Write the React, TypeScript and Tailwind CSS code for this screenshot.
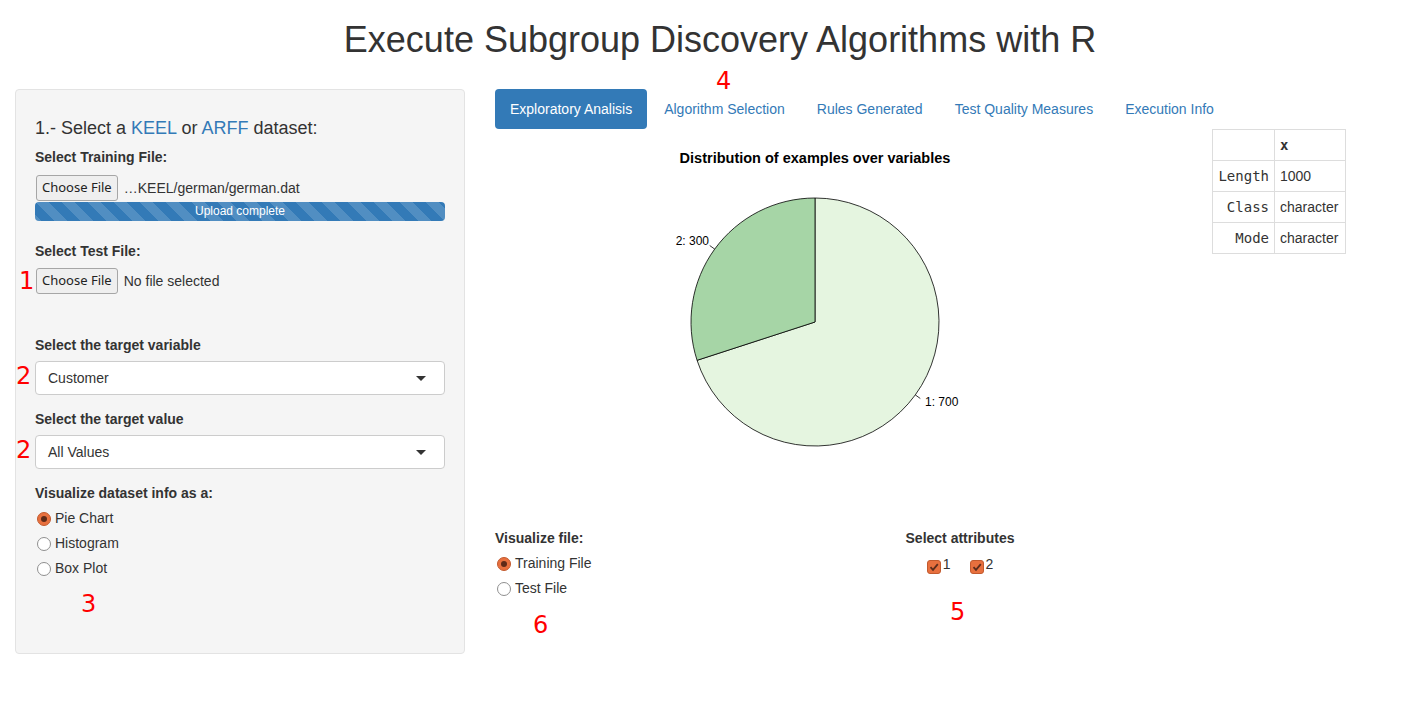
import React from "react";

const sans = "font-['Liberation_Sans',Arial,sans-serif]";

const Radio = ({ checked, label }: { checked?: boolean; label: string }) => (
  <div className="flex items-center h-[25px]">
    {checked ? (
      <span className="ml-[2px] w-[14px] h-[14px] rounded-full bg-[#e8703e] border border-[#c25a2e] flex items-center justify-center">
        <span className="w-[6px] h-[6px] rounded-full bg-[#5e2a18]" />
      </span>
    ) : (
      <span className="ml-[2px] w-[14px] h-[14px] rounded-full bg-white border border-[#8f8f8f]" />
    )}
    <span className="ml-[4px]">{label}</span>
  </div>
);

const Check = ({ label }: { label: string }) => (
  <div className="flex items-start">
    <span className="mt-[6px] w-[14px] h-[14px] rounded-[3px] bg-[#e8703e] border border-[#c25a2e] flex items-center justify-center">
      <svg width="10" height="10" viewBox="0 0 10 10">
        <path d="M1.5 5.2 L4 7.8 L8.8 2.2" fill="none" stroke="#5a2c1c" strokeWidth="1.8" />
      </svg>
    </span>
    <span className="ml-[2px] leading-[20px]">{label}</span>
  </div>
);

const FileInput = ({ name }: { name: string }) => (
  <div className="flex items-center h-[26px]">
    <button className="ml-[1px] h-[26px] px-[5px] rounded-[3px] border border-[#a6a6a6] bg-[#efefef] text-[13px] text-[#222] font-['Noto_Sans',sans-serif]">
      Choose File
    </button>
    <span className="ml-[6px]">{name}</span>
  </div>
);

const Select = ({ value }: { value: string }) => (
  <div className="mt-[6px] h-[34px] bg-white border border-[#cccccc] rounded-[4px] flex items-center justify-between pl-[12px] pr-[18px]">
    <span>{value}</span>
    <span className="w-0 h-0 border-x-[5px] border-x-transparent border-t-[5px] border-t-[#333]" />
  </div>
);

// red annotation digits drawn over the screenshot
const Mark = ({ n, cls }: { n: string; cls: string }) => (
  <span className={"absolute text-[24px] leading-none text-[#ff0000] font-['DejaVu_Sans',sans-serif] " + cls}>{n}</span>
);

const PieChart = () => (
  <svg width="610" height="399" className="block">
    <text x="320" y="34" textAnchor="middle" fontWeight="bold" fontSize="14.5" fontFamily="Liberation Sans, Arial, sans-serif" fill="#000">
      Distribution of examples over variables
    </text>
    <path d="M320 193 L320 69 A124 124 0 1 1 202.07 231.32 Z" fill="#e5f5e0" stroke="#000" strokeWidth="0.8" />
    <path d="M320 193 L320 69 A124 124 0 0 0 202.07 231.32 Z" fill="#a6d5a6" stroke="#000" strokeWidth="0.8" />
    <line x1="219.7" y1="120.1" x2="214.7" y2="116.5" stroke="#000" strokeWidth="0.8" />
    <line x1="420.3" y1="265.9" x2="425.3" y2="269.5" stroke="#000" strokeWidth="0.8" />
    <text x="214" y="116" textAnchor="end" fontSize="12" fontFamily="Liberation Sans, Arial, sans-serif" fill="#000">2: 300</text>
    <text x="430" y="277" fontSize="12" fontFamily="Liberation Sans, Arial, sans-serif" fill="#000">1: 700</text>
  </svg>
);

const rows = [
  ["Length", "1000"],
  ["Class", "character"],
  ["Mode", "character"],
];

export default function App() {
  return (
    <div className={"w-full overflow-hidden bg-white text-[14px] text-[#333] " + sans}>
      <div className="relative w-[1440px] h-[714px] px-[15px] pt-[20px]">
        <h1 className="h-[40px] leading-[40px] text-center text-[36px]">
          Execute Subgroup Discovery Algorithms with R
        </h1>

        <div className="mt-[29px] flex">
          {/* Sidebar */}
          <div className="w-[450px] h-[565px] bg-[#f5f5f5] border border-[#e3e3e3] rounded-[4px] px-[19px] pt-[28px] flex flex-col">
            <h4 className="h-[20px] leading-[20px] text-[18px]">
              1.- Select a <span className="text-[#337ab7]">KEEL</span> or{" "}
              <span className="text-[#337ab7]">ARFF</span> dataset:
            </h4>
            <label className="mt-[9px] h-[20px] leading-[20px] font-bold">Select Training File:</label>
            <div className="mt-[8px]">
              <FileInput name="…KEEL/german/german.dat" />
            </div>
            <div className="mt-[1px] h-[19px] rounded-[4px] bg-[#337ab7] bg-[linear-gradient(45deg,rgba(255,255,255,.15)_25%,transparent_25%,transparent_50%,rgba(255,255,255,.15)_50%,rgba(255,255,255,.15)_75%,transparent_75%,transparent)] bg-[length:26px_26px] text-white text-[12px] leading-[19px] text-center">
              Upload complete
            </div>
            <label className="mt-[20px] h-[20px] leading-[20px] font-bold">Select Test File:</label>
            <div className="mt-[7px]">
              <FileInput name="No file selected" />
            </div>
            <label className="mt-[41px] h-[20px] leading-[20px] font-bold">Select the target variable</label>
            <Select value="Customer" />
            <label className="mt-[14px] h-[20px] leading-[20px] font-bold">Select the target value</label>
            <Select value="All Values" />
            <label className="mt-[14px] h-[20px] leading-[20px] font-bold">Visualize dataset info as a:</label>
            <div className="mt-[3px]">
              <Radio checked label="Pie Chart" />
              <Radio label="Histogram" />
              <Radio label="Box Plot" />
            </div>
          </div>

          {/* Main panel */}
          <div className="ml-[30px] w-[930px] flex flex-col">
            <div className="flex gap-[2px]">
              <span className="px-[15px] py-[10px] leading-[20px] rounded-[4px] bg-[#337ab7] text-white">Exploratory Analisis</span>
              <span className="px-[15px] py-[10px] leading-[20px] text-[#337ab7]">Algorithm Selection</span>
              <span className="px-[15px] py-[10px] leading-[20px] text-[#337ab7]">Rules Generated</span>
              <span className="px-[15px] py-[10px] leading-[20px] text-[#337ab7]">Test Quality Measures</span>
              <span className="px-[15px] py-[10px] leading-[20px] text-[#337ab7]">Execution Info</span>
            </div>

            <div className="flex">
              <div className="w-[640px]">
                <PieChart />
              </div>
              <div className="w-[290px] flex justify-center">
                <table className="self-start border-collapse -ml-[2px]">
                  <thead>
                    <tr>
                      <th className="w-[62px] h-[31px] border border-[#dddddd]" />
                      <th className="w-[71px] h-[31px] border border-[#dddddd] px-[5px] text-left font-bold font-['DejaVu_Sans_Mono',monospace] text-[14px]">x</th>
                    </tr>
                  </thead>
                  <tbody>
                    {rows.map(([k, v]) => (
                      <tr key={k}>
                        <td className="h-[31px] border border-[#dddddd] pr-[5px] text-right font-['DejaVu_Sans_Mono',monospace] text-[14px]">{k}</td>
                        <td className="h-[31px] border border-[#dddddd] px-[5px]">{v}</td>
                      </tr>
                    ))}
                  </tbody>
                </table>
              </div>
            </div>

            <div className="flex">
              <div className="w-[305px]">
                <label className="block h-[20px] leading-[20px] font-bold">Visualize file:</label>
                <div className="mt-[3px]">
                  <Radio checked label="Training File" />
                  <Radio label="Test File" />
                </div>
              </div>
              <div className="w-[320px] flex flex-col items-center">
                <label className="block h-[20px] leading-[20px] font-bold">Select attributes</label>
                <div className="mt-[6px] flex gap-[19px]">
                  <Check label="1" />
                  <Check label="2" />
                </div>
              </div>
            </div>
          </div>
        </div>

        <Mark n="1" cls="left-[19px] top-[269px]" />
        <Mark n="2" cls="left-[16px] top-[364px]" />
        <Mark n="2" cls="left-[16px] top-[438px]" />
        <Mark n="3" cls="left-[81px] top-[592px]" />
        <Mark n="4" cls="left-[716px] top-[69px]" />
        <Mark n="5" cls="left-[950px] top-[600px]" />
        <Mark n="6" cls="left-[533px] top-[613px]" />
      </div>
    </div>
  );
}
